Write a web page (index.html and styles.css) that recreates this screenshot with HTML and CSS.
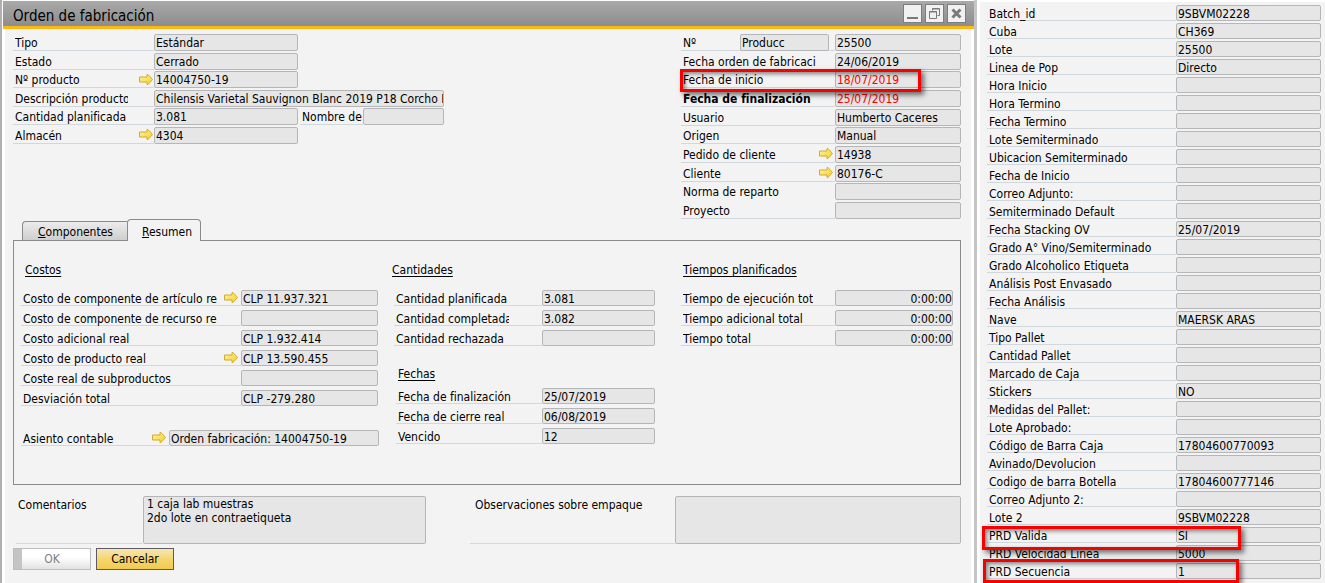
FILE: index.html
```html
<!DOCTYPE html>
<html lang="es">
<head>
<meta charset="utf-8">
<title>Orden de fabricación</title>
<link rel="stylesheet" href="styles.css">
</head>
<body>
<svg class="defs" aria-hidden="true">
  <defs>
    <linearGradient id="gold" x1="0" y1="0" x2="1" y2="1">
      <stop offset="0" stop-color="#fdf3a8"/>
      <stop offset="1" stop-color="#f8cf1c"/>
    </linearGradient>
    <symbol id="arrow" viewBox="0 0 14 11">
      <path d="M.5 3h7.500V.5H9L13.500 5.500 9 10.500H8V8H.5z" fill="url(#gold)" stroke="#cfab2e"/>
    </symbol>
  </defs>
</svg>
<div class="desktop">
  <main class="window">
    <header class="titlebar">
      <h1>Orden de fabricación</h1>
      <div class="controls">
        <button type="button" aria-label="Minimizar"><svg viewBox="0 0 17 17"><path d="M3 13h11" stroke-width="2"/></svg></button>
        <button type="button" aria-label="Restaurar"><svg viewBox="0 0 17 17"><path d="M6.500 5.500v-2h7v7h-2M6 4h8M3.500 6.500h7v7h-7zM3 7h8"/></svg></button>
        <button type="button" aria-label="Cerrar"><svg viewBox="0 0 17 17"><path d="M4.500 4.500l8 8M12.500 4.500l-8 8" stroke-width="3"/></svg></button>
      </div>
    </header>
    <form class="content">
      <section class="summary">
        <div class="general spread">
          <label class="field"><span class="cap"><span class="txt">Tipo</span></span><input readonly value="Estándar"></label>
          <label class="field"><span class="cap"><span class="txt">Estado</span></span><input readonly value="Cerrado"></label>
          <label class="field"><span class="cap"><span class="txt">Nº producto</span><a class="go" href="#producto" aria-label="Abrir producto"><svg><use href="#arrow"/></svg></a></span><input readonly value="14004750-19"></label>
          <label class="field wide"><span class="cap"><span class="txt">Descripción producto</span></span><input readonly value="Chilensis Varietal Sauvignon Blanc 2019 P18 Corcho P"></label>
          <div class="pair">
            <label class="field"><span class="cap"><span class="txt">Cantidad planificada</span></span><input readonly value="3.081"></label>
            <label class="field unit"><span class="cap"><span class="txt">Nombre de</span></span><input readonly></label>
          </div>
          <label class="field"><span class="cap"><span class="txt">Almacén</span><a class="go" href="#almacen" aria-label="Abrir almacén"><svg><use href="#arrow"/></svg></a></span><input readonly value="4304"></label>
        </div>
        <div class="document spread">
          <div class="field"><span class="cap series"><label class="txt" for="numero">Nº</label><input readonly aria-label="Serie" value="Producc"></span><input id="numero" readonly value="25500"></div>
          <label class="field"><span class="cap"><span class="txt">Fecha orden de fabricaci</span></span><input readonly value="24/06/2019"></label>
          <label class="field late marked"><span class="cap"><span class="txt">Fecha de inicio</span></span><input readonly value="18/07/2019"></label>
          <label class="field late"><span class="cap"><strong class="txt">Fecha de finalización</strong></span><input readonly value="25/07/2019"></label>
          <label class="field"><span class="cap"><span class="txt">Usuario</span></span><input readonly value="Humberto Caceres"></label>
          <label class="field"><span class="cap"><span class="txt">Origen</span></span><input readonly value="Manual"></label>
          <label class="field"><span class="cap"><span class="txt">Pedido de cliente</span><a class="go" href="#pedido" aria-label="Abrir pedido"><svg><use href="#arrow"/></svg></a></span><input readonly value="14938"></label>
          <label class="field"><span class="cap"><span class="txt">Cliente</span><a class="go" href="#cliente" aria-label="Abrir cliente"><svg><use href="#arrow"/></svg></a></span><input readonly value="80176-C"></label>
          <label class="field plain"><span class="cap"><span class="txt">Norma de reparto</span></span><input readonly></label>
          <label class="field"><span class="cap"><span class="txt">Proyecto</span></span><input readonly></label>
        </div>
      </section>

      <div class="tabs" role="tablist">
        <button type="button" class="tab" role="tab" aria-selected="false"><span><u>C</u>omponentes</span></button>
        <button type="button" class="tab active" role="tab" aria-selected="true"><span><u>R</u>esumen</span></button>
      </div>
      <section class="panel" role="tabpanel">
        <div class="costs">
          <h2>Costos</h2>
          <div class="list">
            <label class="field"><span class="cap"><span class="txt">Costo de componente de artículo re</span><a class="go" href="#articulo" aria-label="Abrir costo de artículo"><svg><use href="#arrow"/></svg></a></span><input readonly value="CLP 11.937.321"></label>
            <label class="field"><span class="cap"><span class="txt">Costo de componente de recurso re</span></span><input readonly></label>
            <label class="field"><span class="cap"><span class="txt">Costo adicional real</span></span><input readonly value="CLP 1.932.414"></label>
            <label class="field"><span class="cap"><span class="txt">Costo de producto real</span><a class="go" href="#costo" aria-label="Abrir costo de producto"><svg><use href="#arrow"/></svg></a></span><input readonly value="CLP 13.590.455"></label>
            <label class="field"><span class="cap"><span class="txt">Coste real de subproductos</span></span><input readonly></label>
            <label class="field"><span class="cap"><span class="txt">Desviación total</span></span><input readonly value="CLP -279.280"></label>
          </div>
          <label class="field entry"><span class="cap"><span class="txt">Asiento contable</span><a class="go" href="#asiento" aria-label="Abrir asiento"><svg><use href="#arrow"/></svg></a></span><input readonly value="Orden fabricación: 14004750-19"></label>
        </div>
        <div class="amounts">
          <h2>Cantidades</h2>
          <div class="list">
            <label class="field"><span class="cap"><span class="txt">Cantidad planificada</span></span><input readonly value="3.081"></label>
            <label class="field"><span class="cap"><span class="txt">Cantidad completada</span></span><input readonly value="3.082"></label>
            <label class="field"><span class="cap"><span class="txt">Cantidad rechazada</span></span><input readonly></label>
          </div>
          <div class="dates">
            <h2>Fechas</h2>
            <div class="list">
              <label class="field"><span class="cap"><span class="txt">Fecha de finalización</span></span><input readonly value="25/07/2019"></label>
              <label class="field"><span class="cap"><span class="txt">Fecha de cierre real</span></span><input readonly value="06/08/2019"></label>
              <label class="field"><span class="cap"><span class="txt">Vencido</span></span><input readonly value="12"></label>
            </div>
          </div>
        </div>
        <div class="times">
          <h2>Tiempos planificados</h2>
          <div class="list">
            <label class="field"><span class="cap"><span class="txt">Tiempo de ejecución tot</span></span><input readonly value="0:00:00"></label>
            <label class="field"><span class="cap"><span class="txt">Tiempo adicional total</span></span><input readonly value="0:00:00"></label>
            <label class="field"><span class="cap"><span class="txt">Tiempo total</span></span><input readonly value="0:00:00"></label>
          </div>
        </div>
      </section>

      <section class="notes">
        <label class="note comments"><span class="cap">Comentarios</span><textarea readonly>1 caja lab muestras
2do lote en contraetiqueta</textarea></label>
        <label class="note remarks"><span class="cap">Observaciones sobre empaque</span><textarea readonly></textarea></label>
      </section>
      <div class="actions">
        <button type="button" class="ok" disabled>OK</button>
        <button type="button" class="cancel">Cancelar</button>
      </div>
    </form>
  </main>

  <aside class="side">
    <label class="field"><span class="cap">Batch_id</span><input readonly value="9SBVM02228"></label>
    <label class="field"><span class="cap">Cuba</span><input readonly value="CH369"></label>
    <label class="field"><span class="cap">Lote</span><input readonly value="25500"></label>
    <label class="field"><span class="cap">Linea de Pop</span><input readonly value="Directo"></label>
    <label class="field"><span class="cap">Hora Inicio</span><input readonly></label>
    <label class="field"><span class="cap">Hora Termino</span><input readonly></label>
    <label class="field"><span class="cap">Fecha Termino</span><input readonly></label>
    <label class="field"><span class="cap">Lote Semiterminado</span><input readonly></label>
    <label class="field"><span class="cap">Ubicacion Semiterminado</span><input readonly></label>
    <label class="field"><span class="cap">Fecha de Inicio</span><input readonly></label>
    <label class="field"><span class="cap">Correo Adjunto:</span><input readonly></label>
    <label class="field"><span class="cap">Semiterminado Default</span><input readonly></label>
    <label class="field"><span class="cap">Fecha Stacking OV</span><input readonly value="25/07/2019"></label>
    <label class="field"><span class="cap">Grado A° Vino/Semiterminado</span><input readonly></label>
    <label class="field"><span class="cap">Grado Alcoholico Etiqueta</span><input readonly></label>
    <label class="field"><span class="cap">Análisis Post Envasado</span><input readonly></label>
    <label class="field"><span class="cap">Fecha Análisis</span><input readonly></label>
    <label class="field"><span class="cap">Nave</span><input readonly value="MAERSK ARAS"></label>
    <label class="field"><span class="cap">Tipo Pallet</span><input readonly></label>
    <label class="field"><span class="cap">Cantidad Pallet</span><input readonly></label>
    <label class="field"><span class="cap">Marcado de Caja</span><input readonly></label>
    <label class="field"><span class="cap">Stickers</span><input readonly value="NO"></label>
    <label class="field"><span class="cap">Medidas del Pallet:</span><input readonly></label>
    <label class="field"><span class="cap">Lote Aprobado:</span><input readonly></label>
    <label class="field"><span class="cap">Código de Barra Caja</span><input readonly value="17804600770093"></label>
    <label class="field"><span class="cap">Avinado/Devolucion</span><input readonly></label>
    <label class="field"><span class="cap">Codigo de barra Botella</span><input readonly value="17804600777146"></label>
    <label class="field"><span class="cap">Correo Adjunto 2:</span><input readonly></label>
    <label class="field"><span class="cap">Lote 2</span><input readonly value="9SBVM02228"></label>
    <label class="field marked"><span class="cap">PRD Valida</span><input readonly value="SI"></label>
    <label class="field"><span class="cap">PRD Velocidad Linea</span><input readonly value="5000"></label>
    <label class="field marked last"><span class="cap">PRD Secuencia</span><input readonly value="1"></label>
  </aside>
</div>
</body>
</html>
```
FILE: styles.css
```css
* { box-sizing: border-box; }

body {
  margin: 0;
  background: #fff;
  color: #000;
  font: 12px/15px Tahoma, "DejaVu Sans Condensed", "Noto Sans", sans-serif;
}

input, textarea, button { font: inherit; color: inherit; margin: 0; }
.defs { position: absolute; width: 0; height: 0; }

.desktop { display: flex; min-height: 100vh; overflow: hidden; }

/* Main window */
.window {
  flex: 1;
  min-width: 0;
  border-left: 2px solid #b0b0b0;
  border-right: 3px solid #c6c6c6;
  padding: 1px 0 0 1px;
}

.titlebar {
  display: flex;
  align-items: center;
  justify-content: space-between;
  height: 28px;
  padding: 0 8px 0 10px;
  border-bottom: 3px solid #fdb813;
  background: linear-gradient(#a9a9a9, #8d8d8d);
}
.titlebar h1 { margin: 0; font-size: 15px; line-height: 20px; font-weight: normal; padding-top: 4px; }

.controls { display: flex; gap: 3px; }
.controls button {
  width: 19px;
  height: 19px;
  padding: 0;
  border: 1px solid #7d7d7d;
  background: #f1f1f1;
}
.controls svg { display: block; width: 17px; height: 17px; fill: none; stroke: #7a7a7a; }

.content {
  min-height: calc(100vh - 29px);
  margin: 0 3px 0 2px;
  padding: 5px 10px 0 8px;
  background: #f3f3f3;
}

/* Caption and value pairs */
.field { display: flex; position: relative; height: 16px; }
.field .cap {
  flex: 1;
  min-width: 0;
  display: flex;
  justify-content: space-between;
  border-bottom: 1px solid #d0d8de;
  padding-left: 2px;
  line-height: 19px;
  white-space: nowrap;
}
.field.plain .cap { border-color: transparent; }
.txt { overflow: clip visible; max-width: 112px; }
.field input {
  width: 126px;
  height: 100%;
  padding: 1px 0 0 1px;
  border: 1px solid #b4b6b7;
  border-radius: 2px;
  background: #e6e6e6;
  outline: 0;
}
.go { display: flex; align-items: center; margin-right: 1px; }
.go svg { width: 14px; height: 11px; }

.marked::after {
  content: "";
  position: absolute;
  z-index: 1;
  inset: -2px 40px -4px -1px;
  border: 3px solid #f60000;
  box-shadow: 3px 3px 5px #0008, inset 2px 2px 4px #0007;
  pointer-events: none;
}

/* Order header */
.summary { display: flex; justify-content: space-between; align-items: flex-start; }
.spread { display: flex; flex-direction: column; justify-content: space-between; }
.spread .field { height: 17px; }
.general { width: 431px; min-height: 110px; }
.general .txt { max-width: 113px; }
.general .cap { flex: 0 0 141px; }
.general input { width: 144px; }
.general .wide input { width: 290px; }
.pair { display: flex; gap: 2px; }
.general .unit .cap { flex-basis: 63px; }
.general .unit input { width: 81px; }
.document { width: 280px; min-height: 185px; }
.document .txt { max-width: 135px; }
.document .go { margin-right: 2px; }
.document .series input { width: 89px; margin-right: 6px; height: 17px; }
.late input { color: #f00; }

/* Tabs */
.tabs { display: flex; align-items: flex-end; height: 22px; padding-left: 9px; margin-bottom: -1px; }
.tab {
  height: 20px;
  padding: 2px 14px 0 15px;
  border: 1px solid #8a8a8a;
  border-right: 0;
  border-radius: 4px 0 0 0;
  background: linear-gradient(#ececec, #cecece);
}
.tab.active {
  height: 22px;
  padding: 3px 8px 0 14px;
  border-right: 1px solid #8a8a8a;
  border-bottom: 0;
  border-radius: 4px 4px 0 0;
  background: #f3f3f3;
}

.panel {
  display: grid;
  grid-template-columns: 373px 1fr 272px;
  min-height: 245px;
  padding: 21px 7px;
  border: 1px solid #8a8a8a;
}
.panel h2 {
  margin: 0 0 12px;
  padding-left: 4px;
  font-size: 12px;
  line-height: 16px;
  font-weight: normal;
  text-decoration: underline;
  text-underline-offset: 2px;
}
.list { display: flex; flex-direction: column; gap: 4px; }

.costs { width: 357px; }
.costs input { width: 137px; }
.costs .txt { max-width: 198px; }
.costs .go { margin-right: 3px; }
.costs .entry { width: 358px; margin-top: 24px; }
.costs .entry input { width: 210px; }

.amounts { width: 261px; }
.amounts h2 { padding: 0; margin-left: -2px; }
.amounts input { width: 113px; }
.amounts .txt { max-width: 113px; }
.dates { padding: 20px 0 0 2px; }
.dates h2 { margin: 0 0 6px; padding-left: 2px; }

.times h2 { padding-left: 2px; }
.times .txt { max-width: 133px; }
.times input { width: 118px; padding-left: 0; text-align: right; }

/* Notes */
.notes { display: flex; justify-content: space-between; margin-top: 11px; padding-left: 3px; }
.note { display: flex; height: 48px; }
.note .cap { border-bottom: 1px solid #d8d8d8; padding: 2px 0 0 2px; }
.note textarea {
  border: 1px solid #b4b6b7;
  border-radius: 2px;
  background: #e6e6e6;
  padding: 0 3px;
  line-height: 14px;
  resize: none;
  outline: 0;
}
.comments .cap { width: 127px; }
.comments textarea { width: 283px; }
.remarks .cap { width: 205px; padding-left: 5px; }
.remarks textarea { width: 286px; }

.actions { display: flex; gap: 5px; margin-top: 4px; }
.actions button { width: 78px; height: 22px; padding: 0; border: 1px solid #5c5c64; }
.actions .ok {
  border-color: #bdbdbd;
  color: #808080;
  background: linear-gradient(90deg, #c4c4c4 8px, transparent 8px), linear-gradient(#fff 40%, #e2e2e2);
}
.actions .cancel { background: linear-gradient(#f7e6b4, #f4d56a 55%, #f2cb50); }

/* User-defined fields */
.side {
  flex: 0 0 345px;
  display: flex;
  flex-direction: column;
  gap: 2px;
  margin: 2px 0 0 3px;
  padding: 3px 4px 4px 7px;
  background: #f3f3f3;
}
.side .field input { width: 145px; }
.side .marked::after { inset: -1px 80px -7px -5px; }
.side .last::after { inset: -4px 82px -4px -4px; }
```
